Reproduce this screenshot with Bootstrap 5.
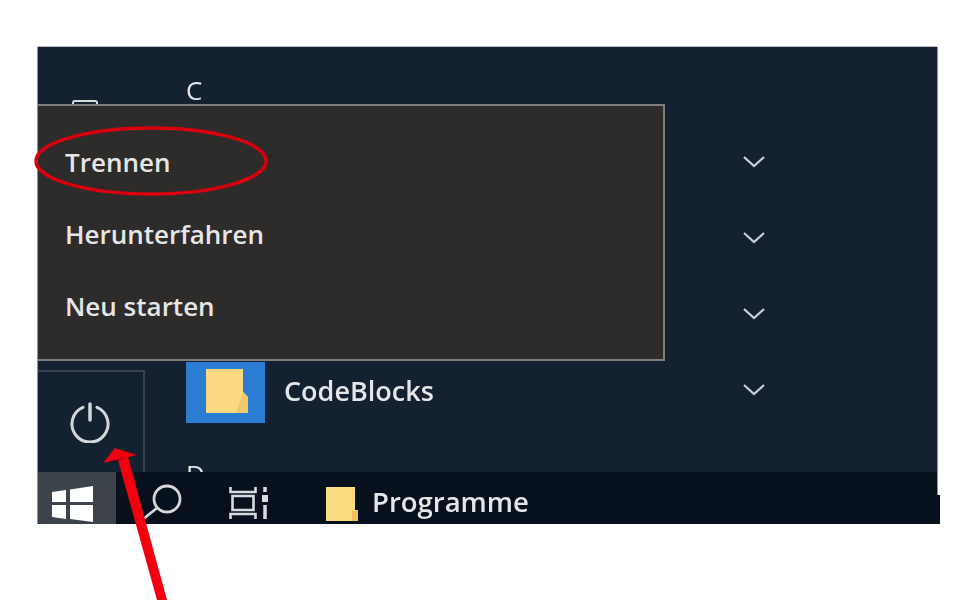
<!DOCTYPE html>
<html lang="de">
<head>
<meta charset="utf-8">
<title>Startmenü</title>
<link href="https://cdn.jsdelivr.net/npm/bootstrap@5.3.0/dist/css/bootstrap.min.css" rel="stylesheet">
<style>
html,body{height:600px;overflow:hidden;background:#fff}
body{font-family:"Open Sans","Noto Sans",sans-serif;color:#e4e6e8;font-weight:600}
.shot{width:899px;height:477px;margin:47px 0 0 38px;position:relative;background:#142131;box-shadow:0 -1px 0 #b9bcc0,-1px 0 0 #8d949c,1px 0 0 #8d949c;filter:blur(.7px)}
.stage{height:425px;overflow:hidden}
.rail{width:107px;flex:none}
.rail-peek{width:26px;height:12px;margin:53px 0 0 34px;border:2px solid #d8dadc;border-bottom:0;border-radius:3px 3px 0 0}
.power{height:102px;margin-top:auto;border-top:2px solid #39424e;border-right:2px solid #39424e;padding-top:29px;padding-left:31px}
.apps{width:620px;padding-left:41px;flex:none}
.heading{height:76px;font-size:26px;font-weight:500;line-height:1;padding-top:30px;padding-bottom:10px}
.heading-d{padding-top:34px;height:60px}
.app-row{height:76px;font-size:27px}
.tile{width:79px;height:61px;background:#2b7cd3;margin-right:19px;margin-top:7px;padding:6px 0 0 20px}
.app-name{flex:1;padding-top:5px}
.bar{height:52px;background:#07111e;position:relative}
.bar-ext{position:absolute;left:899px;top:23px;width:3px;height:29px;background:#07111e}
.start{width:78px;background:#3d434b;padding:14px 0 0 14px}
.search{width:113px;padding:11px 0 0 22px}
.taskview{width:97px;padding:15px 0 0 0}
.folder-small{margin-top:15px;flex:none}
.task-name{font-size:27.500px;padding:8px 0 0 14px;line-height:1}
.popup{position:absolute;left:0;top:57px;width:627px;height:257px;background:#2e2c2b;border:2px solid #7e7e7e;border-left:0;padding:21px 0 0 27px;font-size:26px}
.popup-item{height:72px;line-height:70px;white-space:nowrap}
.notes{position:absolute;left:0;top:0;pointer-events:none}
</style>
</head>
<body>
<div class="shot d-flex flex-column">
  <div class="stage d-flex">
    <div class="rail d-flex flex-column">
      <div class="rail-peek"></div>
      <div class="power">
        <svg width="42" height="42" viewBox="0 0 42 42" fill="none" stroke="#d4d7da" stroke-width="3" stroke-linecap="round"><path d="M14 6.400A18 18 0 1 0 28 6.400"/><path d="M21 3v16" stroke-width="3.500"/></svg>
      </div>
    </div>
    <div class="apps">
      <div class="heading">C</div>
      <div class="app-row d-flex align-items-center"><span class="app-name"></span><svg width="22" height="13" viewBox="0 0 22 13" fill="none" stroke="#cdd1d5" stroke-width="2.200"><path d="M1 2l10 9 10-9"/></svg></div>
      <div class="app-row d-flex align-items-center"><span class="app-name"></span><svg width="22" height="13" viewBox="0 0 22 13" fill="none" stroke="#cdd1d5" stroke-width="2.200"><path d="M1 2l10 9 10-9"/></svg></div>
      <div class="app-row d-flex align-items-center"><span class="app-name"></span><svg width="22" height="13" viewBox="0 0 22 13" fill="none" stroke="#cdd1d5" stroke-width="2.200"><path d="M1 2l10 9 10-9"/></svg></div>
      <div class="app-row d-flex align-items-center">
        <div class="tile">
          <svg width="42" height="44" viewBox="0 0 42 44"><path d="M0 0h37v23l5 5v16H0z" fill="#fbd980"/><path d="M30 44L37 23l5 5v16z" fill="#f3c868"/></svg>
        </div>
        <span class="app-name">CodeBlocks</span>
        <svg width="22" height="13" viewBox="0 0 22 13" fill="none" stroke="#cdd1d5" stroke-width="2.200"><path d="M1 2l10 9 10-9"/></svg>
      </div>
      <div class="heading heading-d">D</div>
    </div>
  </div>
  <div class="bar d-flex">
    <div class="start">
      <svg width="42" height="36" viewBox="0 0 42 36" fill="#fff"><path d="M0 6l14-2v12H0zM18 3.500L41 0v16H18zM0 19h14v14L0 31zM18 19h23v17l-23-3z"/></svg>
    </div>
    <div class="search">
      <svg width="46" height="44" viewBox="0 0 46 44" fill="none" stroke="#d4d7da" stroke-width="2.800"><circle cx="29" cy="16" r="13"/><path d="M19 25L4 37"/></svg>
    </div>
    <div class="taskview">
      <svg width="43" height="33" viewBox="0 0 43 33" fill="none" stroke="#d8dbde" stroke-width="2.600"><path d="M1.500 0v5h25V0M3.500 9h21v14h-21zM1.500 32v-5h25v5"/><path d="M36 0v5M36 18v14" stroke-width="3.500"/><path d="M33 8h6v7h-6z" fill="#d8dbde" stroke="none"/></svg>
    </div>
    <svg class="folder-small" width="32" height="34" viewBox="0 0 32 34"><path d="M0 0h29v23h3v11H0z" fill="#fbdc80"/><path d="M26 24h6v10h-6z" fill="#f0c35e"/></svg>
    <div class="task-name d-flex align-items-center">Programme</div>
    <div class="bar-ext"></div>
  </div>
  <div class="popup">
    <div class="popup-item">Trennen</div>
    <div class="popup-item">Herunterfahren</div>
    <div class="popup-item">Neu starten</div>
  </div>
</div>
<svg class="notes" width="978" height="600" viewBox="0 0 978 600" fill="none">
  <ellipse cx="151" cy="161" rx="115" ry="33" stroke="#d8000f" stroke-width="3.500"/>
  <path d="M118 460L128 457L167 600H157z" fill="#f2000f"/>
  <path d="M115 448L103 463L137 455z" fill="#f2000f"/>
</svg>
</body>
</html>
